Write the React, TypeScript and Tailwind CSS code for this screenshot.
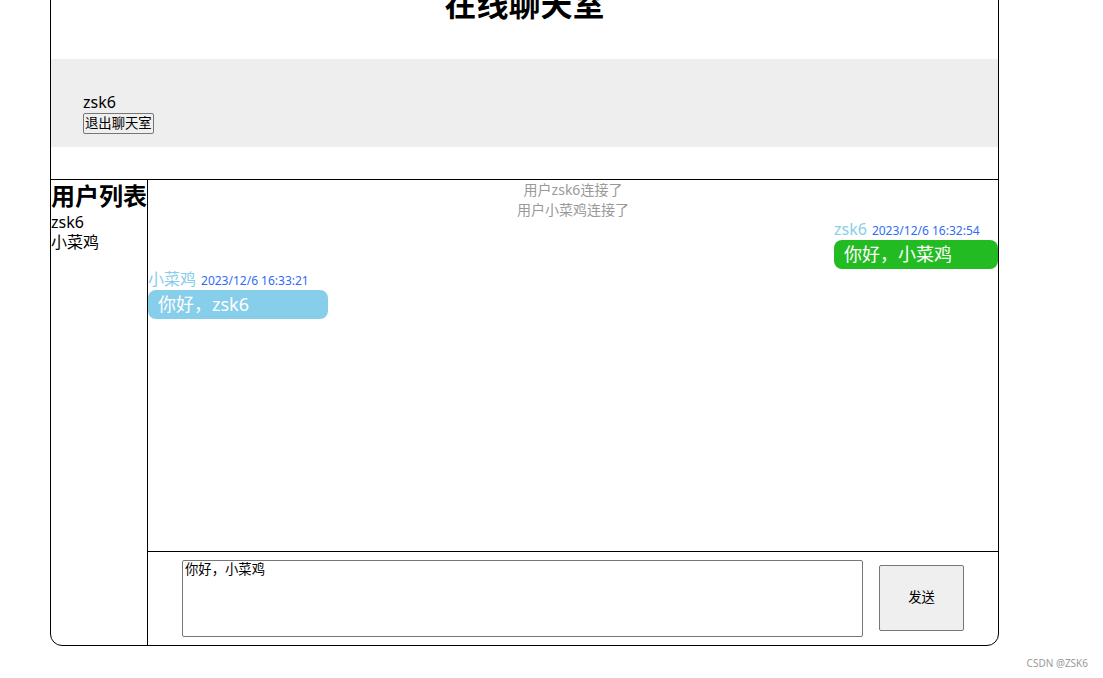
import React from 'react';

const users = ['zsk6', '小菜鸡'];

const systemMessages = ['用户zsk6连接了', '用户小菜鸡连接了'];

const ChatBubble = (props: any) => {
  const { name, time, text, mine, width } = props;

  return (
    <div className={`flex ${mine ? 'justify-end' : 'justify-start'}`}>
      <div className={width}>
        <div className="flex items-baseline gap-[5px] leading-[19px]">
          <span className="text-[16px] text-[#87ceeb]">{name}</span>
          <span className="text-[12px] text-[#2f6cf5]">{time}</span>
        </div>
        <div
          className={`rounded-[8px] pl-[10px] text-[18px] leading-[29px] text-white ${
            mine ? 'bg-[#22bb22]' : 'bg-[#87ceeb]'
          }`}>
          {text}
        </div>
      </div>
    </div>
  );
};

export default function App() {
  return (
    <div
      className="relative h-[678px] w-[1103px] overflow-hidden bg-white text-black"
      style={{ fontFamily: '"Noto Sans", "Noto Sans CJK SC", sans-serif' }}>
      {/* main box, page is scrolled so the top is cut */}
      <div className="ml-[50px] -mt-[40px] w-[949px] rounded-b-[12px] border border-black">
        {/* title */}
        <div className="h-[98px] pt-[24px] text-center">
          <h1 className="text-[32px] font-bold leading-[37px]">在线聊天室</h1>
        </div>

        {/* current user */}
        <div className="h-[88px] bg-[#eeeeee] pl-[32px] pt-[34px]">
          <div className="text-[16px] leading-[19px]">zsk6</div>
          <button className="mt-[1px] block h-[21px] rounded-[2px] border border-[#767676] bg-[#efefef] px-[1px] text-[13.33px] leading-[17px]">
            退出聊天室
          </button>
        </div>

        <div className="h-[33px] border-b border-black" />

        {/* body */}
        <div className="flex h-[465px]">
          {/* user list */}
          <div className="w-[97px] border-r border-black">
            <div className="text-[24px] font-bold leading-[32px]">用户列表</div>
            {users.map((u) => (
              <div key={u} className="text-[16px] leading-[20px]">
                {u}
              </div>
            ))}
          </div>

          {/* chat */}
          <div className="flex flex-1 flex-col">
            <div className="h-[372px] border-b border-black">
              {systemMessages.map((m) => (
                <div key={m} className="text-center text-[14px] leading-[20px] text-[#999999]">
                  {m}
                </div>
              ))}
              <ChatBubble mine name="zsk6" time="2023/12/6 16:32:54" text="你好，小菜鸡" width="w-[164px]" />
              <div className="pt-[1px]">
                <ChatBubble name="小菜鸡" time="2023/12/6 16:33:21" text="你好，zsk6" width="w-[180px]" />
              </div>
            </div>

            {/* input */}
            <div className="flex flex-1 items-start pl-[34px] pt-[8px]">
              <textarea
                className="h-[77px] w-[681px] resize-none rounded-[2px] border border-[#767676] px-[2px] text-[13.33px] leading-[16px] outline-none"
                style={{ fontFamily: '"Noto Sans CJK SC", monospace' }}
                defaultValue="你好，小菜鸡"
              />
              <button className="ml-[16px] mt-[5px] h-[66px] w-[85px] rounded-[2px] border border-[#767676] bg-[#efefef] text-[13.33px]">
                发送
              </button>
            </div>
          </div>
        </div>
      </div>

      <div className="absolute right-[15px] top-[656px] text-[10px] text-[#999999]">CSDN @ZSK6</div>
    </div>
  );
}
